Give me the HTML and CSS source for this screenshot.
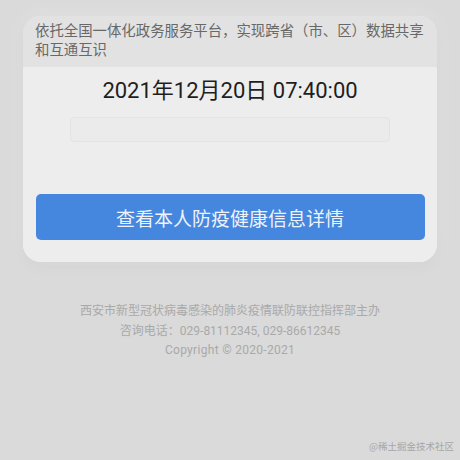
FILE: index.html
```html
<!DOCTYPE html>
<html lang="zh-CN">
<head>
<meta charset="utf-8">
<title>防疫健康信息</title>
<link rel="stylesheet" href="styles.css">
</head>
<body>
<div class="page">
  <section class="card">
    <div class="card-head">依托全国一体化政务服务平台，实现跨省（市、区）数据共享和互通互识</div>
    <div class="card-body">
      <div class="datetime">2021年12月20日 07:40:00</div>
      <div class="field"></div>
      <button class="btn" type="button">查看本人防疫健康信息详情</button>
    </div>
  </section>
  <footer class="footer">
    <p>西安市新型冠状病毒感染的肺炎疫情联防联控指挥部主办</p>
    <p>咨询电话：029-81112345, 029-86612345</p>
    <p class="copyright">Copyright © 2020-2021</p>
  </footer>
  <div class="mark">@稀土掘金技术社区</div>
</div>
</body>
</html>
```

FILE: styles.css
```css
html, body {
  margin: 0;
  padding: 0;
}

body {
  background: #dadada;
  font-family: Roboto, "Noto Sans CJK SC", sans-serif;
  width: 460px;
  height: 460px;
  overflow: hidden;
}

.page {
  position: relative;
  height: 460px;
  padding-top: 16px;
  box-sizing: border-box;
}

.card {
  margin: 0 23px;
  border-radius: 18px;
  overflow: hidden;
  background: #ececec;
  box-shadow: 0 4px 14px rgba(0, 0, 0, 0.06), 0 0 18px rgba(255, 255, 255, 0.35);
}

.card-head {
  background: #e2e2e2;
  color: #686868;
  font-size: 14.4px;
  line-height: 19px;
  padding: 6px 12px 7px 12px;
  height: 38px;
}

.card-body {
  background: #ededed;
  padding: 10px 12px 22px 12px;
  display: flex;
  flex-direction: column;
  align-items: center;
}

.datetime {
  font-size: 22px;
  line-height: 28px;
  color: #1e1e1e;
}

.field {
  margin-top: 12px;
  width: 320px;
  height: 25px;
  box-sizing: border-box;
  border: 1px solid #e3e3e3;
  border-radius: 4px;
  background: #ebebeb;
}

.btn {
  margin-top: 52px;
  width: 389px;
  height: 46px;
  border: none;
  border-radius: 5px;
  background: #4586de;
  color: #eef3fb;
  font-family: "Noto Sans CJK SC", sans-serif;
  font-size: 19px;
  padding: 0;
}

.footer {
  margin-top: 40px;
  text-align: center;
  color: #a9a9a9;
  font-size: 12px;
  line-height: 19.5px;
}

.footer p {
  margin: 0;
}

.footer .copyright {
  letter-spacing: 0.3px;
}

.mark {
  position: absolute;
  right: 6px;
  bottom: 7px;
  font-size: 9.5px;
  color: #a6a6a6;
  font-family: "Noto Sans CJK SC", serif;
}
```
